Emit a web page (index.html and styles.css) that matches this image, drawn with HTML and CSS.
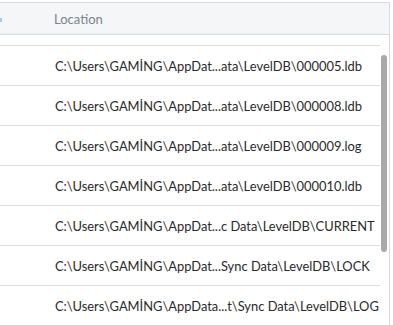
FILE: index.html
```html
<!DOCTYPE html>
<html>
<head>
<meta charset="utf-8">
<link rel="stylesheet" href="styles.css">
</head>
<body>
<div class="table">
  <div class="head">
    <span class="sort-mark"></span>
    <div class="th">Location</div>
  </div>
  <div class="body">
    <div class="row">C:\Users\GAMİNG\AppDat...ata\LevelDB\000005.ldb</div>
    <div class="row">C:\Users\GAMİNG\AppDat...ata\LevelDB\000008.ldb</div>
    <div class="row">C:\Users\GAMİNG\AppDat...ata\LevelDB\000009.log</div>
    <div class="row">C:\Users\GAMİNG\AppDat...ata\LevelDB\000010.ldb</div>
    <div class="row">C:\Users\GAMİNG\AppDat...c Data\LevelDB\CURRENT</div>
    <div class="row">C:\Users\GAMİNG\AppDat...Sync Data\LevelDB\LOCK</div>
    <div class="row">C:\Users\GAMİNG\AppData...t\Sync Data\LevelDB\LOG</div>
    <div class="thumb"></div>
  </div>
</div>
</body>
</html>
```
FILE: styles.css
```css
html, body {
  margin: 0;
  padding: 0;
  background: #ffffff;
  overflow: hidden;
}
body {
  font-family: Lato, "Noto Sans", sans-serif;
  font-size: 12.9px;
  color: #2a2a2a;
}
.table {
  margin-top: 2px;
  width: 389px;
  height: 323px;
  border-top: 1px solid #d8dbe0;
  border-right: 1px solid #d8dbe0;
  position: relative;
  overflow: hidden;
}
.head {
  height: 31px;
  background: #f5f6f8;
  border-bottom: 1px solid #d8dbe0;
  display: flex;
  align-items: center;
  position: relative;
}
.sort-mark {
  position: absolute;
  left: 0;
  top: 15px;
  width: 2px;
  height: 4px;
  background: #8fd4f6;
}
.th {
  padding-left: 54px;
  color: #7d828c;
  font-size: 13px;
}
.body {
  padding-top: 10px;
  padding-right: 9px;
  position: relative;
}
.row {
  height: 39px;
  border-top: 1px solid #dedede;
  display: flex;
  align-items: center;
  padding-left: 55px;
  white-space: nowrap;
}
.thumb {
  position: absolute;
  right: 2px;
  top: 20px;
  width: 6px;
  height: 197px;
  border-radius: 3px;
  background: #a9a9a9;
}
```
